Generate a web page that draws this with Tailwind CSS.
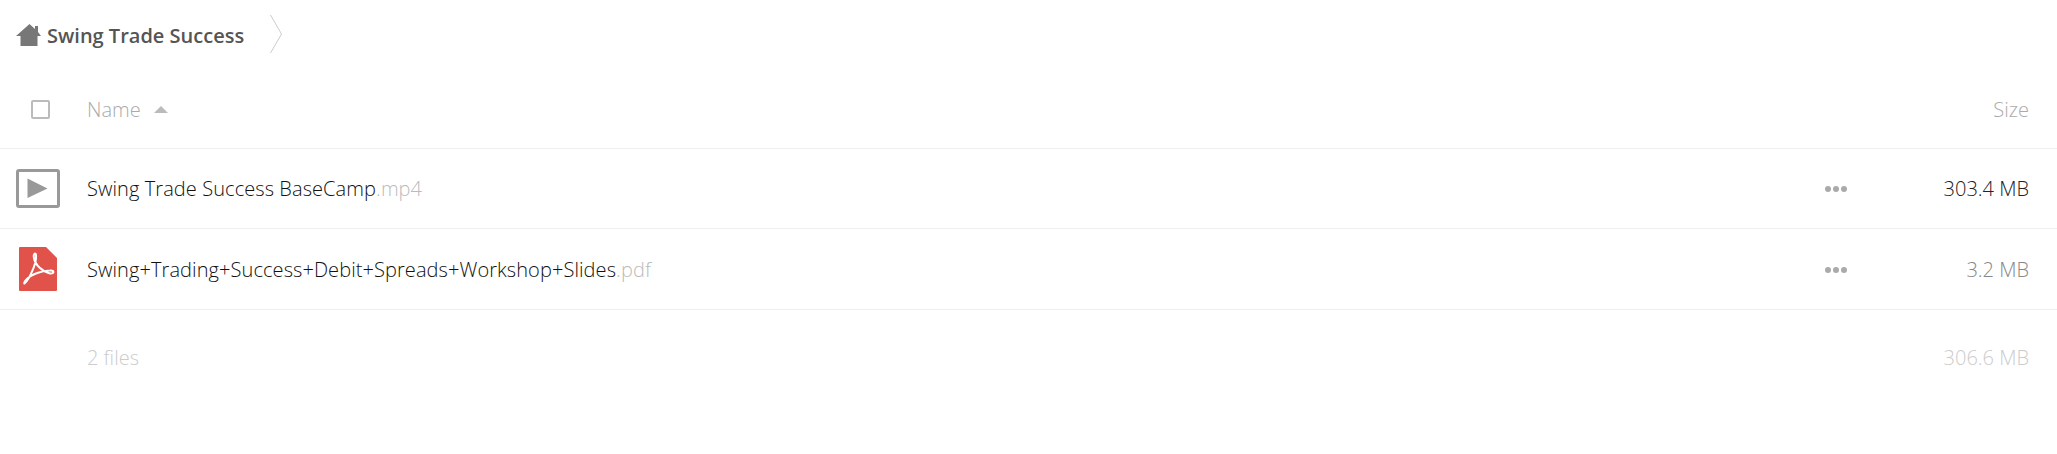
<!DOCTYPE html>
<html lang="en">
<head>
    <meta charset="UTF-8">
    <script src="https://cdn.jsdelivr.net/npm/@tailwindcss/browser@4"></script>
    <title>Swing Trade Success</title>
</head>
<body class="bg-white font-['Open_Sans',sans-serif] font-light overflow-hidden">
    <nav class="h-[71px] flex items-center pl-4">
        <svg class="w-[25px] h-[22px] mb-[1px]" viewBox="0 0 25 22"><path fill="#777" d="M13.500 0 19 5V2h3v6l3 4h-3.500v10h-17V12H0z"/></svg>
        <span class="ml-[6px] text-[20px] font-semibold text-[#555] leading-none">Swing Trade Success</span>
        <svg class="ml-[25px] mt-[-3px] w-[14px] h-[40px]" viewBox="0 0 14 40"><path fill="none" stroke="#ccc" d="M1.500 1 12.500 20 1.500 39"/></svg>
    </nav>
    <div class="h-[78px] flex items-center border-b border-[#eee] text-[20px] text-[#aaa]">
        <div class="w-[87px] pl-[31px]"><div class="w-[19px] h-[19px] border-2 border-[#bbb] rounded-[2px]"></div></div>
        <span class="pt-[1px]">Name</span>
        <span class="ml-[13px] w-0 h-0 border-x-[7px] border-x-transparent border-b-[7px] border-b-[#bbb]"></span>
        <span class="ml-auto pr-[28px] pt-[1px]">Size</span>
    </div>
    <div class="h-[80px] flex items-center border-b border-[#eee] text-[20px]">
        <div class="w-[87px] pl-4"><svg class="w-[44px] h-[39px]" viewBox="0 0 44 39"><rect x="1.500" y="1.500" width="41" height="36" rx="1.500" fill="none" stroke="#999" stroke-width="3"/><path fill="#999" d="M11.500 9.500 31.500 19.500 11.500 29z"/></svg></div>
        <span class="text-[#111] tracking-[0.08px]">Swing Trade Success BaseCamp<span class="text-[#bbb]">.mp4</span></span>
        <div class="ml-auto flex gap-[2px] pt-[1px]">
            <span class="w-[6px] h-[6px] rounded-full bg-[#aaa]"></span>
            <span class="w-[6px] h-[6px] rounded-full bg-[#aaa]"></span>
            <span class="w-[6px] h-[6px] rounded-full bg-[#aaa]"></span>
        </div>
        <span class="w-[210px] text-right pr-[28px] text-[#222]">303.4 MB</span>
    </div>
    <div class="h-[81px] flex items-center border-b border-[#eee] text-[20px]">
        <div class="w-[87px] pl-[19px]"><svg class="w-[38px] h-[44px]" viewBox="0 0 38 44"><path fill="#e0524a" d="M1 0h26l11 11v32a1 1 0 0 1-1 1H1a1 1 0 0 1-1-1V1a1 1 0 0 1 1-1z"/><path fill="none" stroke="#fff" stroke-width="2" d="M5.500 36.500C10 33 18 16 17 8c-.500-3-3-1-2 3 1 7 9 14 16 15.500 5 .500 4-3.500 0-3-7 0-19 3.500-24 9.500-2 2-2 4-1.500 3.500z"/></svg></div>
        <span class="text-[#111] tracking-[0.08px] pt-[1px]">Swing+Trading+Success+Debit+Spreads+Workshop+Slides<span class="text-[#bbb]">.pdf</span></span>
        <div class="ml-auto flex gap-[2px] pt-[1px]">
            <span class="w-[6px] h-[6px] rounded-full bg-[#aaa]"></span>
            <span class="w-[6px] h-[6px] rounded-full bg-[#aaa]"></span>
            <span class="w-[6px] h-[6px] rounded-full bg-[#aaa]"></span>
        </div>
        <span class="w-[210px] text-right pr-[28px] text-[#888] pt-[1px]">3.2 MB</span>
    </div>
    <div class="h-[96px] flex items-center text-[20px] text-[#ccc]">
        <span class="pl-[87px]">2 files</span>
        <span class="ml-auto pr-[28px]">306.6 MB</span>
    </div>
</body>
</html>
